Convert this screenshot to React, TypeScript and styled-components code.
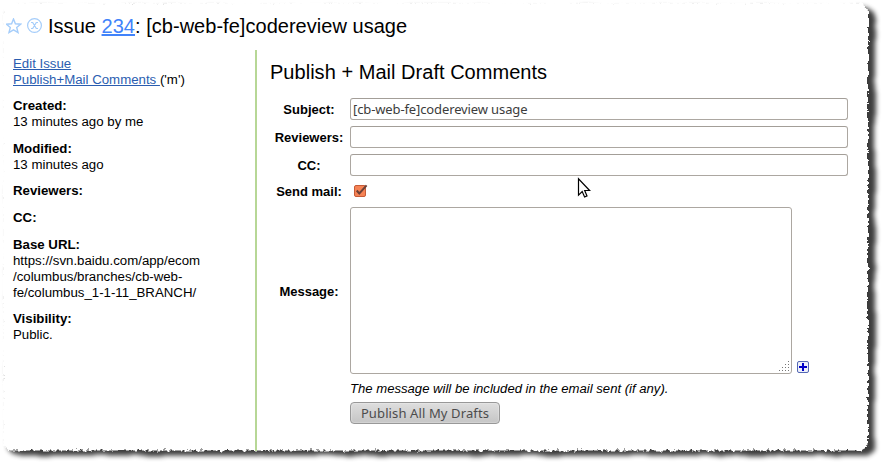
import React from "react";
import styled, { createGlobalStyle } from "styled-components";

const GlobalStyle = createGlobalStyle`
  * { box-sizing: border-box; }
  body {
    margin: 0;
    background: #fff;
    color: #000;
    font: 13.25px/16px "Liberation Sans", Arial, sans-serif;
    overflow: hidden;
  }
`;

const Page = styled.div`
  position: relative;
  width: 882px;
  height: 464px;
  overflow: hidden;
`;

const PaperEdge = styled.svg`
  position: absolute;
  inset: 0;
`;

const Content = styled.div`
  position: relative;
  height: 451px;
  padding-left: 6px;
  display: flex;
  flex-direction: column;
`;

const Header = styled.header`
  height: 50px;
  padding-top: 14px;
  display: flex;
  align-items: flex-start;
`;

const HeaderIcon = styled.svg`
  width: 16px;
  height: 16px;
  margin: 4px 5px 0 0;
  flex: none;
`;

const Title = styled.h1`
  margin: 0;
  font-size: 20px;
  line-height: 24px;
  font-weight: 400;
  letter-spacing: 0.03px;
  white-space: nowrap;
`;

const Link = styled.a<{ $bright?: boolean }>`
  color: ${(p) => (p.$bright ? "#4183fa" : "#2a5db0")};
  text-decoration: underline;
`;

const Columns = styled.div`
  flex: 1;
  display: flex;
`;

const Sidebar = styled.aside`
  width: 251px;
  padding: 5.7px 0 0 7px;
  border-right: 2px solid #b7d796;
  display: flex;
  flex-direction: column;
  gap: 10.6px;
  white-space: nowrap;
`;

const Main = styled.main`
  padding: 10px 0 0 13px;
`;

const Heading = styled.h2`
  margin: 0 0 14px;
  font-size: 20px;
  line-height: 24px;
  font-weight: 400;
  letter-spacing: 0.03px;
  white-space: nowrap;
`;

const Form = styled.div`
  display: grid;
  grid-template-columns: 78px 498px;
  column-gap: 2px;
  row-gap: 6px;
  align-items: center;
`;

const Rows = styled(Form)`
  grid-template-rows: 22px 22px 22px;
`;

const LowerRows = styled(Form)`
  margin-top: 6px;
  grid-template-rows: 19px 167px 16px 22px;
`;

const Label = styled.label<{ $drop?: boolean }>`
  padding-top: ${(p) => (p.$drop ? "2px" : "0")};
  font-size: 13px;
  font-weight: 700;
  text-align: center;
  white-space: nowrap;
`;

const Input = styled.input`
  width: 498px;
  height: 22px;
  border: 1px solid #aca7a1;
  border-top-color: #a39e98;
  border-radius: 3px;
  padding: 0 2px;
  outline: 0;
  color: #3c3c3c;
  background: #fff;
  font: 13px "Noto Sans", sans-serif;
  letter-spacing: -0.12px;
`;

const MessageCell = styled.div`
  display: flex;
  align-items: flex-end;
  gap: 5px;
`;

const MessageBox = styled.div`
  width: 442px;
  height: 167px;
  border: 1px solid #aca7a1;
  border-radius: 3px;
  display: flex;
  align-items: flex-end;
  justify-content: flex-end;
`;

const Hint = styled.em`
  grid-column: 2;
  padding-top: 2px;
  font-size: 13.12px;
  white-space: nowrap;
`;

const Button = styled.button`
  grid-column: 2;
  width: 150px;
  height: 22px;
  padding: 0 0 1px;
  border: 1px solid #989898;
  border-radius: 4px;
  background: linear-gradient(#dedede, #c5c5c5);
  box-shadow: inset 0 0 1px 1px rgba(255, 255, 255, 0.25);
  color: #4c4c4c;
  font: 13px "Noto Sans", sans-serif;
  letter-spacing: 0.12px;
  white-space: nowrap;
`;

const CheckIcon = styled.svg`
  margin-left: 3px;
  display: block;
`;

const Pointer = styled.svg`
  position: absolute;
  left: 577px;
  top: 177px;
`;

const details: { label: string; lines: string[] }[] = [
  { label: "Created:", lines: ["13 minutes ago by me"] },
  { label: "Modified:", lines: ["13 minutes ago"] },
  { label: "Reviewers:", lines: [] },
  { label: "CC:", lines: [] },
  {
    label: "Base URL:",
    lines: ["https://svn.baidu.com/app/ecom", "/columbus/branches/cb-web-", "fe/columbus_1-1-11_BRANCH/"],
  },
  { label: "Visibility:", lines: ["Public."] },
];

const gripDots = [
  [10, 0],
  [7, 3], [10, 3],
  [4, 6], [7, 6], [10, 6],
  [1, 9], [4, 9], [7, 9], [10, 9],
];

function TornPaper() {
  return (
    <PaperEdge width="882" height="464" viewBox="0 0 882 464">
      <defs>
        <filter id="shade" x="-5%" y="-5%" width="110%" height="110%" colorInterpolationFilters="sRGB">
          <feTurbulence type="fractalNoise" baseFrequency="0.035" numOctaves="2" seed="4" result="n" />
          <feDisplacementMap in="SourceGraphic" in2="n" scale="5" xChannelSelector="R" yChannelSelector="G" result="d" />
          <feGaussianBlur in="d" stdDeviation="2.7" />
        </filter>
        <filter id="tear" x="-5%" y="-5%" width="110%" height="110%" colorInterpolationFilters="sRGB">
          <feTurbulence type="fractalNoise" baseFrequency="0.3" numOctaves="3" seed="8" result="n" />
          <feDisplacementMap in="SourceGraphic" in2="n" scale="6" xChannelSelector="R" yChannelSelector="G" result="d" />
          <feGaussianBlur in="d" stdDeviation="0.45" />
        </filter>
      </defs>
      <rect x="8" y="8" width="867" height="447.500" rx="9" fill="#000" opacity=".76" filter="url(#shade)" />
      <rect x="3" y="3" width="865" height="447.500" rx="9" fill="#fff" filter="url(#tear)" />
    </PaperEdge>
  );
}

export default function App() {
  return (
    <>
      <GlobalStyle />
      <Page>
        <TornPaper />
        <Content>
          <Header>
            <HeaderIcon viewBox="0 0 16 16" fill="none" stroke="#a5cdfa" strokeWidth="1.4">
              <path d="M7.5 1 9.4 5.8 14.6 6.200 10.700 9.500 12 14.500 7.500 11.800 3 14.500 4.300 9.500.4 6.200 5.600 5.800Z" />
            </HeaderIcon>
            <HeaderIcon viewBox="0 0 16 16" fill="none" stroke="#a5cdfa" strokeWidth="1.2">
              <circle cx="7.5" cy="7.500" r="6.900" />
              <path d="M4 4.500h1.700L9.300 10.500H11M11 4.500H9.300L5.700 10.500H4" />
            </HeaderIcon>
            <Title>
              Issue <Link $bright>234</Link>: [cb-web-fe]codereview usage
            </Title>
          </Header>
          <Columns>
            <Sidebar>
              <div>
                <div><Link>Edit Issue</Link></div>
                <div><Link>Publish+Mail Comments&nbsp;</Link>('m')</div>
              </div>
              {details.map((d) => (
                <div key={d.label}>
                  <b>{d.label}</b>
                  {d.lines.map((line) => <div key={line}>{line}</div>)}
                </div>
              ))}
            </Sidebar>
            <Main>
              <Heading>Publish + Mail Draft Comments</Heading>
              <Rows>
                <Label $drop>Subject:</Label>
                <Input defaultValue="[cb-web-fe]codereview usage" />
                <Label $drop>Reviewers:</Label>
                <Input />
                <Label $drop>CC:</Label>
                <Input />
              </Rows>
              <LowerRows>
                <Label>Send mail:</Label>
                <CheckIcon width="16" height="15" viewBox="0 0 16 15">
                  <rect x="1.500" y="1.500" width="11" height="11" rx="1.500" fill="#f68355" stroke="#c65b37" />
                  <path d="M3.700 6.500 6.300 9.500 13.600 1.300" fill="none" stroke="#6d4137" strokeWidth="2" />
                </CheckIcon>
                <Label $drop>Message:</Label>
                <MessageCell>
                  <MessageBox>
                    <svg width="13" height="12" viewBox="0 0 13 12">
                      {gripDots.map(([x, y]) => (
                        <rect key={`${x}-${y}`} x={x} y={y} width="1" height="1" fill="#777" />
                      ))}
                    </svg>
                  </MessageBox>
                  <svg width="12" height="14" viewBox="0 0 12 14">
                    <rect x=".5" y="1.500" width="11" height="11" rx="1.500" fill="#edf0fa" stroke="#5468b4" />
                    <path d="M6 3v8M2 7h8" stroke="#0000c8" strokeWidth="2" />
                  </svg>
                </MessageCell>
                <Hint>The message will be included in the email sent (if any).</Hint>
                <Button>Publish All My Drafts</Button>
              </LowerRows>
            </Main>
          </Columns>
        </Content>
        <Pointer width="14" height="22" viewBox="0 0 14 22">
          <path d="M1.500 1.800V18.200L5.200 14.600 7.600 20 10 18.900 7.700 13.500H12.600Z" fill="#fff" stroke="#000" strokeWidth="1.200" />
        </Pointer>
      </Page>
    </>
  );
}
